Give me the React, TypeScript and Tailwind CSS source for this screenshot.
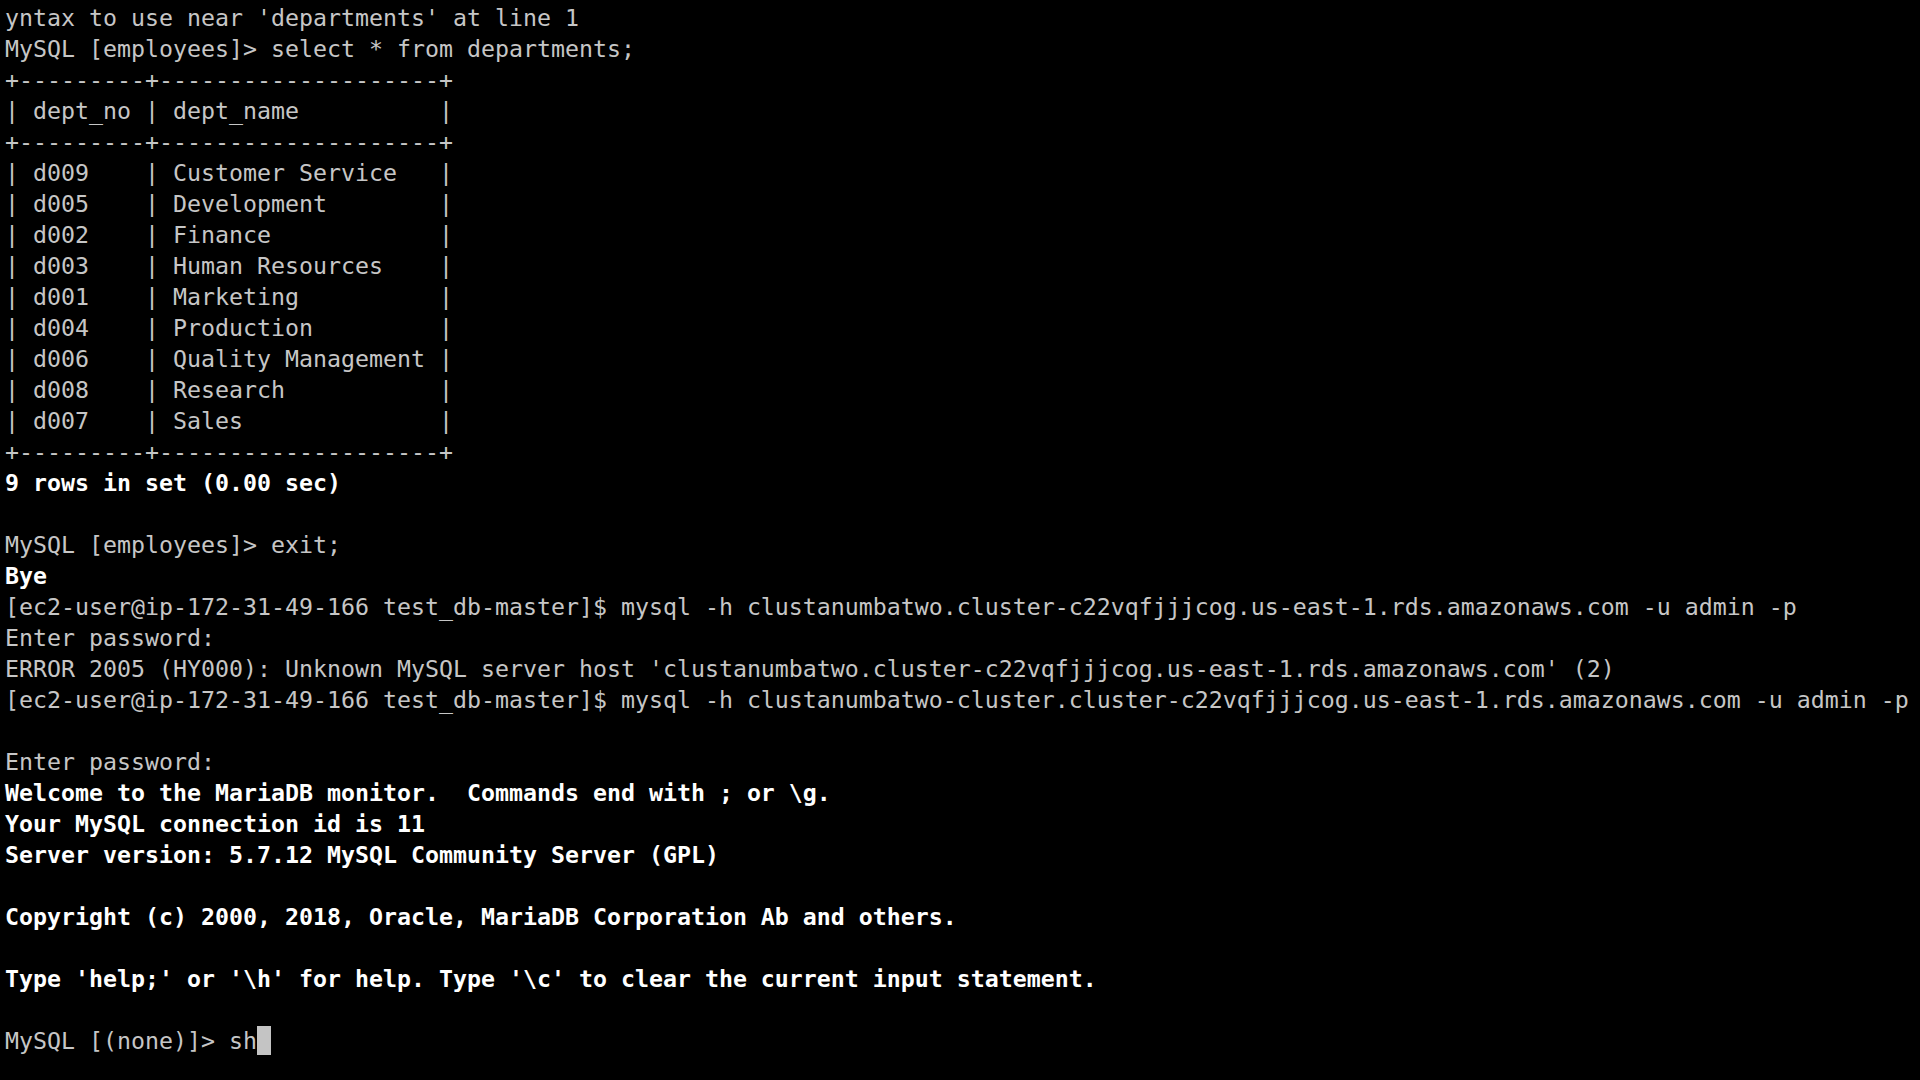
type Line = { text: string; bright?: boolean };

const lines: Line[] = [
  { text: "yntax to use near 'departments' at line 1" },
  { text: "MySQL [employees]> select * from departments;" },
  { text: "+---------+--------------------+" },
  { text: "| dept_no | dept_name          |" },
  { text: "+---------+--------------------+" },
  { text: "| d009    | Customer Service   |" },
  { text: "| d005    | Development        |" },
  { text: "| d002    | Finance            |" },
  { text: "| d003    | Human Resources    |" },
  { text: "| d001    | Marketing          |" },
  { text: "| d004    | Production         |" },
  { text: "| d006    | Quality Management |" },
  { text: "| d008    | Research           |" },
  { text: "| d007    | Sales              |" },
  { text: "+---------+--------------------+" },
  { text: "9 rows in set (0.00 sec)", bright: true },
  { text: "" },
  { text: "MySQL [employees]> exit;" },
  { text: "Bye", bright: true },
  {
    text: "[ec2-user@ip-172-31-49-166 test_db-master]$ mysql -h clustanumbatwo.cluster-c22vqfjjjcog.us-east-1.rds.amazonaws.com -u admin -p",
  },
  { text: "Enter password:" },
  {
    text: "ERROR 2005 (HY000): Unknown MySQL server host 'clustanumbatwo.cluster-c22vqfjjjcog.us-east-1.rds.amazonaws.com' (2)",
  },
  {
    text: "[ec2-user@ip-172-31-49-166 test_db-master]$ mysql -h clustanumbatwo-cluster.cluster-c22vqfjjjcog.us-east-1.rds.amazonaws.com -u admin -p",
  },
  { text: "" },
  { text: "Enter password:" },
  { text: "Welcome to the MariaDB monitor.  Commands end with ; or \\g.", bright: true },
  { text: "Your MySQL connection id is 11", bright: true },
  { text: "Server version: 5.7.12 MySQL Community Server (GPL)", bright: true },
  { text: "" },
  { text: "Copyright (c) 2000, 2018, Oracle, MariaDB Corporation Ab and others.", bright: true },
  { text: "" },
  {
    text: "Type 'help;' or '\\h' for help. Type '\\c' to clear the current input statement.",
    bright: true,
  },
  { text: "" },
];

export default function App() {
  return (
    <div className="h-[1080px] w-[1920px] overflow-hidden bg-black pl-[5px] pt-[2px] font-['DejaVu_Sans_Mono',monospace] text-[23.25px] leading-[31px] text-[#c6c6c6]">
      {lines.map((line, i) => (
        <div
          key={i}
          className={
            line.bright
              ? "h-[31px] whitespace-pre font-bold text-white"
              : "h-[31px] whitespace-pre"
          }
        >
          {line.text}
        </div>
      ))}
      <div className="flex h-[31px] items-center whitespace-pre">
        <span>MySQL [(none)]&gt; sh</span>
        <span className="h-[29px] w-[14px] bg-[#c4c4c4]" />
      </div>
    </div>
  );
}
